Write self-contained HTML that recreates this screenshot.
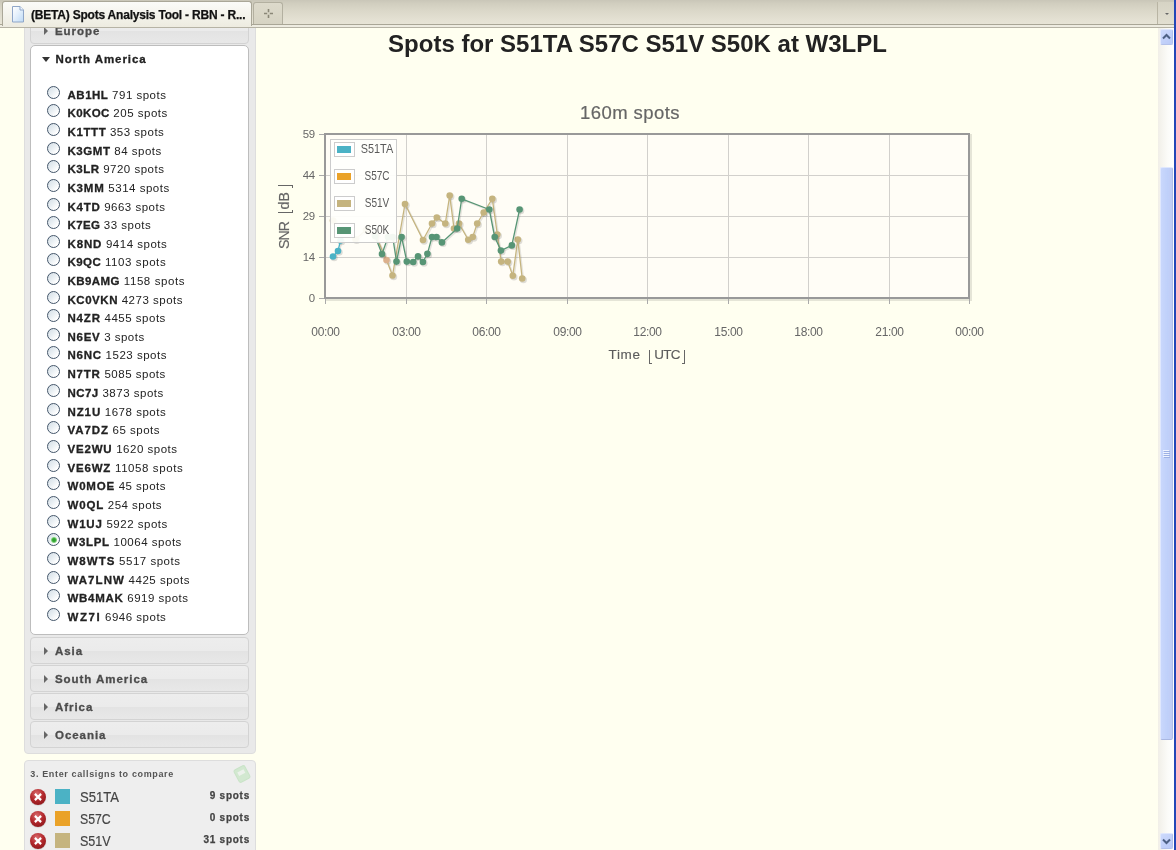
<!DOCTYPE html>
<html><head><meta charset="utf-8"><title>(BETA) Spots Analysis Tool - RBN</title>
<style>
*{box-sizing:border-box}
html,body{margin:0;padding:0;width:1176px;height:850px;overflow:hidden;background:#fffff0;font-family:"Liberation Sans",sans-serif}
.abs{position:absolute}
#wrap{position:absolute;left:0;top:0;width:1176px;height:850px;overflow:hidden;will-change:transform}
#tabbar{position:absolute;left:0;top:0;width:1176px;height:28px;background:linear-gradient(#c9c6b8 0,#d0cdbe 3px,#dad7c8 10px,#e4e1d3 20px,#e7e4d6 24px,#a9a696 24px,#a9a696 25px,#eeece1 25px,#eeece1 27px,#b6b3a5 27px,#b6b3a5 28px);z-index:20}
#tab{position:absolute;left:2px;top:1px;width:250px;height:25px;background:linear-gradient(#fbfbf8,#f3f2ea 60%,#eeece1);border:1px solid #aaa798;border-bottom:none;border-radius:3px 3px 0 0}
#tab .ttl{position:absolute;left:28px;top:6px;font-size:12px;font-weight:bold;color:#111;white-space:nowrap;letter-spacing:-0.21px;line-height:15px;-webkit-text-stroke:0.25px #111}
#newtab{position:absolute;left:253px;top:2px;width:30px;height:22px;background:linear-gradient(#dddacb,#d6d3c3);border:1px solid #b3b0a0;border-bottom:none;border-radius:3px 3px 0 0}
#tabdd{position:absolute;left:1157px;top:2px;width:18px;height:22px;border-left:1px solid #b9b5a4;background:linear-gradient(#d6d3c4,#e2dfd1)}
#winr{position:absolute;left:1174px;top:0;width:2px;height:850px;background:linear-gradient(90deg,#ffffff 0,#ffffff 25%,#2347b8 25%);z-index:30}
#sb{position:absolute;left:1158px;top:28px;width:16px;height:822px;background:linear-gradient(90deg,#f1efe8,#fbfbf8 60%,#ffffff);z-index:10}
#sb .btn{position:absolute;left:1.5px;width:13.5px;height:16px;background:linear-gradient(135deg,#cddafc,#b9c9f7);border:1px solid #dfe7fd;border-right-color:#b3c1ea;border-bottom-color:#b3c1ea;border-radius:2px}
#sb .thumb{position:absolute;left:1.5px;top:139px;width:13.5px;height:573px;background:linear-gradient(90deg,#c9d7fc,#bfd0fa 60%,#c2ccf5);border:1px solid #dfe7fd;border-right-color:#b0bee8;border-bottom-color:#a9b7e2;border-radius:2px}
#side1{position:absolute;left:24px;top:20px;width:232px;height:734px;background:#e9e9e9;border:1px solid #dddddd;border-radius:4px}
.hdr{position:absolute;left:30px;width:219px;height:27px;background:linear-gradient(#ededed 0,#ebebeb 50%,#e3e3e3 52%,#e8e8e8 100%);border:1px solid #d3d3d3;border-radius:4px;font-weight:bold;font-size:11.5px;color:#4c4c4c;white-space:nowrap}
.hdr span{position:absolute;left:24px;top:7px;letter-spacing:0.95px;-webkit-text-stroke:0.3px #4c4c4c}
.hdr i{position:absolute;left:12.5px;top:9px;width:0;height:0;border-left:4.6px solid #666;border-top:4px solid transparent;border-bottom:4px solid transparent}
#na{position:absolute;left:30px;top:45px;width:219px;height:590px;background:#fff;border:1px solid #bdbdbd;border-radius:5px}
#nah{position:absolute;left:55.5px;top:53px;font-weight:bold;font-size:11.5px;color:#222;letter-spacing:0.95px;white-space:nowrap;-webkit-text-stroke:0.3px #222}
#natri{position:absolute;left:42px;top:57px;width:0;height:0;border-top:5px solid #333;border-left:4px solid transparent;border-right:4px solid transparent}
.row{position:absolute;left:0;width:256px;height:18px;white-space:nowrap;font-size:11.5px;color:#222}
.row .t{position:absolute;left:67.5px;top:3px;line-height:14px}
.radio{position:absolute;left:47px;top:1px;width:13px;height:13px;border-radius:50%;border:1px solid #44566a;background:linear-gradient(135deg,#d3dee6 0,#e9eff3 45%,#ffffff 80%)}
.radio.chk:after{content:"";position:absolute;left:2.5px;top:2.5px;width:6px;height:6px;border-radius:50%;background:radial-gradient(circle at 50% 50%,#2c9a2c 0,#36a836 35%,#a8e6a0 75%,rgba(200,240,195,0.6) 100%)}
#side2{position:absolute;left:24px;top:760px;width:232px;height:100px;background:#eeeeee;border:1px solid #dddddd;border-radius:4px}
#s2t{position:absolute;left:30.3px;top:768px;font-size:9px;font-weight:bold;color:#555;white-space:nowrap;letter-spacing:0.64px;line-height:12px}
.cs{position:absolute;left:24px;width:232px;height:22px}
.cs .x{position:absolute;left:6px;top:0;width:16px;height:16px;border-radius:50%;background:radial-gradient(circle at 42% 28%,#d86a6c 0,#b3292d 45%,#8a1619 85%,#7a1114 100%);box-shadow:0 0.5px 1px rgba(0,0,0,.2)}
.cs .x svg{position:absolute;left:0;top:0}
.cs .c{position:absolute;left:31px;top:0px;width:15px;height:15px}
.cs .n{position:absolute;left:56px;top:0px;font-size:14.8px;color:#444;line-height:16px;transform:scaleX(0.885);transform-origin:0 0;white-space:nowrap;-webkit-text-stroke:0.2px #444}
.cs .s{position:absolute;right:6px;top:-0.5px;font-size:10px;font-weight:bold;color:#444;letter-spacing:0.75px;line-height:14px;-webkit-text-stroke:0.25px #444}
#title{position:absolute;left:256px;top:29px;width:763px;text-align:center;font-size:24px;font-weight:bold;color:#222;white-space:nowrap;line-height:30px}
#ctitle{position:absolute;left:530px;top:101.5px;width:200px;text-align:center;font-size:18.5px;color:#666;white-space:nowrap;line-height:22px;letter-spacing:0.45px;-webkit-text-stroke:0.2px #666}
.plot{position:absolute;left:0;top:0}
.xl{position:absolute;top:325px;width:40px;text-align:center;font-size:12px;color:#666;line-height:14px;letter-spacing:-0.35px;white-space:nowrap}
.yl{position:absolute;left:283px;width:32px;text-align:right;font-size:11.4px;color:#666;line-height:14px;letter-spacing:-0.15px}
#ylab{position:absolute;left:275.1px;top:248px;width:70px;height:18px;font-size:14.2px;color:#666;transform:rotate(-90deg);transform-origin:0 0;line-height:18px;white-space:nowrap}
#xlab{position:absolute;left:608.6px;top:346.5px;width:90px;height:18px;font-size:13.5px;color:#5c5c5c;line-height:18px;white-space:nowrap}
#xlab span,#ylab span{position:absolute;top:0;-webkit-text-stroke:0.15px #5c5c5c}
#xlab span{top:-0.5px}
.bl,.br{position:absolute;top:3.4px;width:3.3px;height:14.2px;border-bottom:1.5px solid #666}
.bl{border-left:1.5px solid #666}
.br{border-right:1.5px solid #666}
#legend{position:absolute;left:330px;top:139px;width:66.5px;height:103.5px;background:rgba(255,255,252,0.93);border:1px solid #cccccc}
#legend .sw{position:absolute;left:3px;width:20.5px;height:14.5px;border:1px solid #ccc;background:#fff}
#legend .sw i{position:absolute;left:2px;top:2.5px;width:14px;height:7.5px}
#legend .lt{position:absolute;left:26px;width:40px;text-align:center;font-size:12.8px;color:#5a5a5a;line-height:16px;transform:scaleX(0.85);white-space:nowrap}
</style></head><body><div id="wrap">
<div id="tabbar"><div id="tab">
<svg class="abs" style="left:8px;top:4px" width="14" height="17" viewBox="0 0 14 17"><defs><linearGradient id="pg" x1="0" y1="0" x2="1" y2="1"><stop offset="0" stop-color="#ffffff"/><stop offset="0.45" stop-color="#e6f1fc"/><stop offset="1" stop-color="#bcd9f5"/></linearGradient></defs><path d="M1.5 .5h7.5l3.5 3.5v12h-11z" fill="url(#pg)" stroke="#8fa6c8"/><path d="M9 .5v3.5h3.5" fill="#f4f9ff" stroke="#8fa6c8"/></svg>
<div class="ttl">(BETA) Spots Analysis Tool - RBN - R...</div></div>
<div id="newtab"><svg class="abs" style="left:10px;top:6px" width="9" height="9" viewBox="0 0 9 9"><path d="M4.5 0v9M0 4.5h9" stroke="#8a8777" stroke-width="1.6" stroke-dasharray="3.2 2.6"/></svg></div>
<div id="tabdd"><i class="abs" style="left:6.5px;top:10.5px;width:0;height:0;border-top:2.5px solid #666;border-left:2.5px solid transparent;border-right:2.5px solid transparent"></i></div>
</div>
<div id="side1"></div>
<div class="hdr" style="top:17px"><i></i><span>Europe</span></div>
<div id="na"></div><i id="natri"></i><div id="nah">North America</div>
<div class="row" style="top:85px"><i class="radio"></i><span class="t"><b style="letter-spacing:0.51px;-webkit-text-stroke:0.3px #222">AB1HL</b><span style="letter-spacing:0.50px">&nbsp;791 spots</span></span></div><div class="row" style="top:103px"><i class="radio"></i><span class="t"><b style="letter-spacing:0.38px;-webkit-text-stroke:0.3px #222">K0KOC</b><span style="letter-spacing:0.50px">&nbsp;205 spots</span></span></div><div class="row" style="top:122px"><i class="radio"></i><span class="t"><b style="letter-spacing:0.60px;-webkit-text-stroke:0.3px #222">K1TTT</b><span style="letter-spacing:0.50px">&nbsp;353 spots</span></span></div><div class="row" style="top:141px"><i class="radio"></i><span class="t"><b style="letter-spacing:0.57px;-webkit-text-stroke:0.3px #222">K3GMT</b><span style="letter-spacing:0.49px">&nbsp;84 spots</span></span></div><div class="row" style="top:159px"><i class="radio"></i><span class="t"><b style="letter-spacing:0.47px;-webkit-text-stroke:0.3px #222">K3LR</b><span style="letter-spacing:0.51px">&nbsp;9720 spots</span></span></div><div class="row" style="top:178px"><i class="radio"></i><span class="t"><b style="letter-spacing:0.81px;-webkit-text-stroke:0.3px #222">K3MM</b><span style="letter-spacing:0.51px">&nbsp;5314 spots</span></span></div><div class="row" style="top:197px"><i class="radio"></i><span class="t"><b style="letter-spacing:0.72px;-webkit-text-stroke:0.3px #222">K4TD</b><span style="letter-spacing:0.51px">&nbsp;9663 spots</span></span></div><div class="row" style="top:215px"><i class="radio"></i><span class="t"><b style="letter-spacing:0.34px;-webkit-text-stroke:0.3px #222">K7EG</b><span style="letter-spacing:0.49px">&nbsp;33 spots</span></span></div><div class="row" style="top:234px"><i class="radio"></i><span class="t"><b style="letter-spacing:0.85px;-webkit-text-stroke:0.3px #222">K8ND</b><span style="letter-spacing:0.51px">&nbsp;9414 spots</span></span></div><div class="row" style="top:252px"><i class="radio"></i><span class="t"><b style="letter-spacing:0.42px;-webkit-text-stroke:0.3px #222">K9QC</b><span style="letter-spacing:0.59px">&nbsp;1103 spots</span></span></div><div class="row" style="top:271px"><i class="radio"></i><span class="t"><b style="letter-spacing:0.44px;-webkit-text-stroke:0.3px #222">KB9AMG</b><span style="letter-spacing:0.59px">&nbsp;1158 spots</span></span></div><div class="row" style="top:290px"><i class="radio"></i><span class="t"><b style="letter-spacing:0.53px;-webkit-text-stroke:0.3px #222">KC0VKN</b><span style="letter-spacing:0.51px">&nbsp;4273 spots</span></span></div><div class="row" style="top:308px"><i class="radio"></i><span class="t"><b style="letter-spacing:0.82px;-webkit-text-stroke:0.3px #222">N4ZR</b><span style="letter-spacing:0.51px">&nbsp;4455 spots</span></span></div><div class="row" style="top:327px"><i class="radio"></i><span class="t"><b style="letter-spacing:0.74px;-webkit-text-stroke:0.3px #222">N6EV</b><span style="letter-spacing:0.48px">&nbsp;3 spots</span></span></div><div class="row" style="top:345px"><i class="radio"></i><span class="t"><b style="letter-spacing:0.77px;-webkit-text-stroke:0.3px #222">N6NC</b><span style="letter-spacing:0.51px">&nbsp;1523 spots</span></span></div><div class="row" style="top:364px"><i class="radio"></i><span class="t"><b style="letter-spacing:0.79px;-webkit-text-stroke:0.3px #222">N7TR</b><span style="letter-spacing:0.51px">&nbsp;5085 spots</span></span></div><div class="row" style="top:383px"><i class="radio"></i><span class="t"><b style="letter-spacing:0.45px;-webkit-text-stroke:0.3px #222">NC7J</b><span style="letter-spacing:0.51px">&nbsp;3873 spots</span></span></div><div class="row" style="top:402px"><i class="radio"></i><span class="t"><b style="letter-spacing:0.89px;-webkit-text-stroke:0.3px #222">NZ1U</b><span style="letter-spacing:0.51px">&nbsp;1678 spots</span></span></div><div class="row" style="top:420px"><i class="radio"></i><span class="t"><b style="letter-spacing:0.91px;-webkit-text-stroke:0.3px #222">VA7DZ</b><span style="letter-spacing:0.49px">&nbsp;65 spots</span></span></div><div class="row" style="top:439px"><i class="radio"></i><span class="t"><b style="letter-spacing:0.82px;-webkit-text-stroke:0.3px #222">VE2WU</b><span style="letter-spacing:0.51px">&nbsp;1620 spots</span></span></div><div class="row" style="top:458px"><i class="radio"></i><span class="t"><b style="letter-spacing:0.82px;-webkit-text-stroke:0.3px #222">VE6WZ</b><span style="letter-spacing:0.59px">&nbsp;11058 spots</span></span></div><div class="row" style="top:476px"><i class="radio"></i><span class="t"><b style="letter-spacing:0.80px;-webkit-text-stroke:0.3px #222">W0MOE</b><span style="letter-spacing:0.49px">&nbsp;45 spots</span></span></div><div class="row" style="top:495px"><i class="radio"></i><span class="t"><b style="letter-spacing:0.83px;-webkit-text-stroke:0.3px #222">W0QL</b><span style="letter-spacing:0.50px">&nbsp;254 spots</span></span></div><div class="row" style="top:514px"><i class="radio"></i><span class="t"><b style="letter-spacing:0.81px;-webkit-text-stroke:0.3px #222">W1UJ</b><span style="letter-spacing:0.51px">&nbsp;5922 spots</span></span></div><div class="row" style="top:532px"><i class="radio chk"></i><span class="t"><b style="letter-spacing:0.66px;-webkit-text-stroke:0.3px #222">W3LPL</b><span style="letter-spacing:0.52px">&nbsp;10064 spots</span></span></div><div class="row" style="top:551px"><i class="radio"></i><span class="t"><b style="letter-spacing:1.02px;-webkit-text-stroke:0.3px #222">W8WTS</b><span style="letter-spacing:0.51px">&nbsp;5517 spots</span></span></div><div class="row" style="top:570px"><i class="radio"></i><span class="t"><b style="letter-spacing:1.05px;-webkit-text-stroke:0.3px #222">WA7LNW</b><span style="letter-spacing:0.51px">&nbsp;4425 spots</span></span></div><div class="row" style="top:588px"><i class="radio"></i><span class="t"><b style="letter-spacing:0.71px;-webkit-text-stroke:0.3px #222">WB4MAK</b><span style="letter-spacing:0.51px">&nbsp;6919 spots</span></span></div><div class="row" style="top:607px"><i class="radio"></i><span class="t"><b style="letter-spacing:1.58px;-webkit-text-stroke:0.3px #222">WZ7I</b><span style="letter-spacing:0.51px">&nbsp;6946 spots</span></span></div>
<div class="hdr" style="top:637px"><i></i><span>Asia</span></div>
<div class="hdr" style="top:665px"><i></i><span>South America</span></div>
<div class="hdr" style="top:693px"><i></i><span>Africa</span></div>
<div class="hdr" style="top:721px"><i></i><span>Oceania</span></div>
<div id="side2"></div>
<div id="s2t">3. Enter callsigns to compare</div>
<svg class="abs" style="left:232px;top:764px;opacity:.38" width="20" height="20" viewBox="0 0 20 20"><g transform="rotate(-28 10 10)"><rect x="4" y="3" width="12" height="14" rx="2" fill="#a5dfa0" stroke="#8fd28a"/><rect x="6.5" y="6.5" width="7" height="4" fill="#e9f8e8"/></g></svg>
<div class="cs" style="top:789px"><div class="x"><svg width="16" height="16" viewBox="0 0 16 16"><path d="M4.9 4.9l6.2 6.2M11.1 4.9l-6.2 6.2" stroke="#fff" stroke-width="2.2" stroke-linecap="butt"/></svg></div><div class="c" style="background:#4bb2c5"></div><div class="n">S51TA</div><div class="s">9 spots</div></div>
<div class="cs" style="top:811px"><div class="x"><svg width="16" height="16" viewBox="0 0 16 16"><path d="M4.9 4.9l6.2 6.2M11.1 4.9l-6.2 6.2" stroke="#fff" stroke-width="2.2" stroke-linecap="butt"/></svg></div><div class="c" style="background:#EAA228"></div><div class="n" style="transform:scaleX(0.83)">S57C</div><div class="s">0 spots</div></div>
<div class="cs" style="top:833px"><div class="x"><svg width="16" height="16" viewBox="0 0 16 16"><path d="M4.9 4.9l6.2 6.2M11.1 4.9l-6.2 6.2" stroke="#fff" stroke-width="2.2" stroke-linecap="butt"/></svg></div><div class="c" style="background:#c5b47f"></div><div class="n" style="transform:scaleX(0.848)">S51V</div><div class="s">31 spots</div></div>
<div id="title">Spots for S51TA S57C S51V S50K at W3LPL</div>
<div id="ctitle">160m spots</div>
<svg class="plot" width="1176" height="850" viewBox="0 0 1176 850">
<rect x="326.5" y="135.5" width="644.0" height="164.0" fill="none" stroke="rgba(0,0,0,0.10)" stroke-width="3"/>
<rect x="325.0" y="134.0" width="644.0" height="164.0" fill="#fffdf6"/>
<line x1="406.5" y1="134.0" x2="406.5" y2="298.0" stroke="#d2d0cc" stroke-width="1"/><line x1="486.5" y1="134.0" x2="486.5" y2="298.0" stroke="#d2d0cc" stroke-width="1"/><line x1="567.5" y1="134.0" x2="567.5" y2="298.0" stroke="#d2d0cc" stroke-width="1"/><line x1="647.5" y1="134.0" x2="647.5" y2="298.0" stroke="#d2d0cc" stroke-width="1"/><line x1="728.5" y1="134.0" x2="728.5" y2="298.0" stroke="#d2d0cc" stroke-width="1"/><line x1="808.5" y1="134.0" x2="808.5" y2="298.0" stroke="#d2d0cc" stroke-width="1"/><line x1="889.5" y1="134.0" x2="889.5" y2="298.0" stroke="#d2d0cc" stroke-width="1"/><line x1="325.0" y1="175.5" x2="969.0" y2="175.5" stroke="#d2d0cc" stroke-width="1"/><line x1="325.0" y1="216.5" x2="969.0" y2="216.5" stroke="#d2d0cc" stroke-width="1"/><line x1="325.0" y1="257.5" x2="969.0" y2="257.5" stroke="#d2d0cc" stroke-width="1"/><line x1="325.5" y1="298.0" x2="325.5" y2="304.0" stroke="#aaa" stroke-width="1"/><line x1="406.5" y1="298.0" x2="406.5" y2="304.0" stroke="#aaa" stroke-width="1"/><line x1="486.5" y1="298.0" x2="486.5" y2="304.0" stroke="#aaa" stroke-width="1"/><line x1="567.5" y1="298.0" x2="567.5" y2="304.0" stroke="#aaa" stroke-width="1"/><line x1="647.5" y1="298.0" x2="647.5" y2="304.0" stroke="#aaa" stroke-width="1"/><line x1="728.5" y1="298.0" x2="728.5" y2="304.0" stroke="#aaa" stroke-width="1"/><line x1="808.5" y1="298.0" x2="808.5" y2="304.0" stroke="#aaa" stroke-width="1"/><line x1="889.5" y1="298.0" x2="889.5" y2="304.0" stroke="#aaa" stroke-width="1"/><line x1="969.5" y1="298.0" x2="969.5" y2="304.0" stroke="#aaa" stroke-width="1"/><line x1="319.0" y1="134.5" x2="325.0" y2="134.5" stroke="#aaa" stroke-width="1"/><line x1="319.0" y1="175.5" x2="325.0" y2="175.5" stroke="#aaa" stroke-width="1"/><line x1="319.0" y1="216.5" x2="325.0" y2="216.5" stroke="#aaa" stroke-width="1"/><line x1="319.0" y1="257.5" x2="325.0" y2="257.5" stroke="#aaa" stroke-width="1"/><line x1="319.0" y1="298.5" x2="325.0" y2="298.5" stroke="#aaa" stroke-width="1"/>
<rect x="325.0" y="134.0" width="644.0" height="164.0" fill="none" stroke="#999999" stroke-width="2"/>
<polyline points="333.0,256.5 338.0,251.0 340.5,240.5" fill="none" stroke="rgba(0,0,0,0.10)" stroke-width="1.6" transform="translate(1.2,1.2)"/><circle cx="334.2" cy="257.7" r="3.5" fill="rgba(0,0,0,0.13)"/><circle cx="339.2" cy="252.2" r="3.5" fill="rgba(0,0,0,0.13)"/><circle cx="341.7" cy="241.7" r="3.5" fill="rgba(0,0,0,0.13)"/><polyline points="333.0,256.5 338.0,251.0 340.5,240.5" fill="none" stroke="#4bb2c5" stroke-width="1.3" stroke-linejoin="round"/><circle cx="333.0" cy="256.5" r="3.3" fill="#4bb2c5"/><circle cx="338.0" cy="251.0" r="3.3" fill="#4bb2c5"/><circle cx="340.5" cy="240.5" r="3.3" fill="#4bb2c5"/><polyline points="333.0,220.5 341.0,228.0 355.5,239.3 366.0,230.0 376.0,236.0 386.5,260.0 392.5,275.5 405.0,204.0 423.0,240.0 432.0,223.5 436.8,217.5 445.3,223.5 449.7,195.5 454.0,228.5 459.0,223.5 468.2,239.8 472.7,237.0 477.2,223.5 483.7,212.5 492.3,198.8 497.3,234.5 501.2,261.6 507.7,261.6 512.8,275.8 517.8,239.6 522.2,278.5" fill="none" stroke="rgba(0,0,0,0.10)" stroke-width="1.6" transform="translate(1.2,1.2)"/><circle cx="334.2" cy="221.7" r="3.5" fill="rgba(0,0,0,0.13)"/><circle cx="342.2" cy="229.2" r="3.5" fill="rgba(0,0,0,0.13)"/><circle cx="356.7" cy="240.5" r="3.5" fill="rgba(0,0,0,0.13)"/><circle cx="367.2" cy="231.2" r="3.5" fill="rgba(0,0,0,0.13)"/><circle cx="377.2" cy="237.2" r="3.5" fill="rgba(0,0,0,0.13)"/><circle cx="387.7" cy="261.2" r="3.5" fill="rgba(0,0,0,0.13)"/><circle cx="393.7" cy="276.7" r="3.5" fill="rgba(0,0,0,0.13)"/><circle cx="406.2" cy="205.2" r="3.5" fill="rgba(0,0,0,0.13)"/><circle cx="424.2" cy="241.2" r="3.5" fill="rgba(0,0,0,0.13)"/><circle cx="433.2" cy="224.7" r="3.5" fill="rgba(0,0,0,0.13)"/><circle cx="438.0" cy="218.7" r="3.5" fill="rgba(0,0,0,0.13)"/><circle cx="446.5" cy="224.7" r="3.5" fill="rgba(0,0,0,0.13)"/><circle cx="450.9" cy="196.7" r="3.5" fill="rgba(0,0,0,0.13)"/><circle cx="455.2" cy="229.7" r="3.5" fill="rgba(0,0,0,0.13)"/><circle cx="460.2" cy="224.7" r="3.5" fill="rgba(0,0,0,0.13)"/><circle cx="469.4" cy="241.0" r="3.5" fill="rgba(0,0,0,0.13)"/><circle cx="473.9" cy="238.2" r="3.5" fill="rgba(0,0,0,0.13)"/><circle cx="478.4" cy="224.7" r="3.5" fill="rgba(0,0,0,0.13)"/><circle cx="484.9" cy="213.7" r="3.5" fill="rgba(0,0,0,0.13)"/><circle cx="493.5" cy="200.0" r="3.5" fill="rgba(0,0,0,0.13)"/><circle cx="498.5" cy="235.7" r="3.5" fill="rgba(0,0,0,0.13)"/><circle cx="502.4" cy="262.8" r="3.5" fill="rgba(0,0,0,0.13)"/><circle cx="508.9" cy="262.8" r="3.5" fill="rgba(0,0,0,0.13)"/><circle cx="514.0" cy="277.0" r="3.5" fill="rgba(0,0,0,0.13)"/><circle cx="519.0" cy="240.8" r="3.5" fill="rgba(0,0,0,0.13)"/><circle cx="523.4" cy="279.7" r="3.5" fill="rgba(0,0,0,0.13)"/><polyline points="333.0,220.5 341.0,228.0 355.5,239.3 366.0,230.0 376.0,236.0 386.5,260.0 392.5,275.5 405.0,204.0 423.0,240.0 432.0,223.5 436.8,217.5 445.3,223.5 449.7,195.5 454.0,228.5 459.0,223.5 468.2,239.8 472.7,237.0 477.2,223.5 483.7,212.5 492.3,198.8 497.3,234.5 501.2,261.6 507.7,261.6 512.8,275.8 517.8,239.6 522.2,278.5" fill="none" stroke="#c5b47f" stroke-width="1.3" stroke-linejoin="round"/><circle cx="333.0" cy="220.5" r="3.3" fill="#c5b47f"/><circle cx="341.0" cy="228.0" r="3.3" fill="#c5b47f"/><circle cx="355.5" cy="239.3" r="3.3" fill="#c5b47f"/><circle cx="366.0" cy="230.0" r="3.3" fill="#c5b47f"/><circle cx="376.0" cy="236.0" r="3.3" fill="#c5b47f"/><circle cx="386.5" cy="260.0" r="3.3" fill="#dcb08c"/><circle cx="392.5" cy="275.5" r="3.3" fill="#c5b47f"/><circle cx="405.0" cy="204.0" r="3.3" fill="#c5b47f"/><circle cx="423.0" cy="240.0" r="3.3" fill="#c5b47f"/><circle cx="432.0" cy="223.5" r="3.3" fill="#c5b47f"/><circle cx="436.8" cy="217.5" r="3.3" fill="#c5b47f"/><circle cx="445.3" cy="223.5" r="3.3" fill="#c5b47f"/><circle cx="449.7" cy="195.5" r="3.3" fill="#c5b47f"/><circle cx="454.0" cy="228.5" r="3.3" fill="#c5b47f"/><circle cx="459.0" cy="223.5" r="3.3" fill="#c5b47f"/><circle cx="468.2" cy="239.8" r="3.3" fill="#c5b47f"/><circle cx="472.7" cy="237.0" r="3.3" fill="#c5b47f"/><circle cx="477.2" cy="223.5" r="3.3" fill="#c5b47f"/><circle cx="483.7" cy="212.5" r="3.3" fill="#c5b47f"/><circle cx="492.3" cy="198.8" r="3.3" fill="#c5b47f"/><circle cx="497.3" cy="234.5" r="3.3" fill="#c5b47f"/><circle cx="501.2" cy="261.6" r="3.3" fill="#c5b47f"/><circle cx="507.7" cy="261.6" r="3.3" fill="#c5b47f"/><circle cx="512.8" cy="275.8" r="3.3" fill="#c5b47f"/><circle cx="517.8" cy="239.6" r="3.3" fill="#c5b47f"/><circle cx="522.2" cy="278.5" r="3.3" fill="#c5b47f"/><polyline points="375.0,236.0 382.0,254.0 388.0,237.0 392.7,237.0 396.5,261.6 401.6,237.0 406.8,261.6 413.2,262.0 418.0,256.4 422.9,262.0 427.4,253.8 432.0,237.0 436.5,237.0 441.9,242.4 457.2,228.5 461.7,198.8 489.3,209.5 494.7,237.0 500.9,250.6 511.8,245.4 519.6,209.5" fill="none" stroke="rgba(0,0,0,0.10)" stroke-width="1.6" transform="translate(1.2,1.2)"/><circle cx="376.2" cy="237.2" r="3.5" fill="rgba(0,0,0,0.13)"/><circle cx="383.2" cy="255.2" r="3.5" fill="rgba(0,0,0,0.13)"/><circle cx="389.2" cy="238.2" r="3.5" fill="rgba(0,0,0,0.13)"/><circle cx="393.9" cy="238.2" r="3.5" fill="rgba(0,0,0,0.13)"/><circle cx="397.7" cy="262.8" r="3.5" fill="rgba(0,0,0,0.13)"/><circle cx="402.8" cy="238.2" r="3.5" fill="rgba(0,0,0,0.13)"/><circle cx="408.0" cy="262.8" r="3.5" fill="rgba(0,0,0,0.13)"/><circle cx="414.4" cy="263.2" r="3.5" fill="rgba(0,0,0,0.13)"/><circle cx="419.2" cy="257.6" r="3.5" fill="rgba(0,0,0,0.13)"/><circle cx="424.1" cy="263.2" r="3.5" fill="rgba(0,0,0,0.13)"/><circle cx="428.6" cy="255.0" r="3.5" fill="rgba(0,0,0,0.13)"/><circle cx="433.2" cy="238.2" r="3.5" fill="rgba(0,0,0,0.13)"/><circle cx="437.7" cy="238.2" r="3.5" fill="rgba(0,0,0,0.13)"/><circle cx="443.1" cy="243.6" r="3.5" fill="rgba(0,0,0,0.13)"/><circle cx="458.4" cy="229.7" r="3.5" fill="rgba(0,0,0,0.13)"/><circle cx="462.9" cy="200.0" r="3.5" fill="rgba(0,0,0,0.13)"/><circle cx="490.5" cy="210.7" r="3.5" fill="rgba(0,0,0,0.13)"/><circle cx="495.9" cy="238.2" r="3.5" fill="rgba(0,0,0,0.13)"/><circle cx="502.1" cy="251.8" r="3.5" fill="rgba(0,0,0,0.13)"/><circle cx="513.0" cy="246.6" r="3.5" fill="rgba(0,0,0,0.13)"/><circle cx="520.8" cy="210.7" r="3.5" fill="rgba(0,0,0,0.13)"/><polyline points="375.0,236.0 382.0,254.0 388.0,237.0 392.7,237.0 396.5,261.6 401.6,237.0 406.8,261.6 413.2,262.0 418.0,256.4 422.9,262.0 427.4,253.8 432.0,237.0 436.5,237.0 441.9,242.4 457.2,228.5 461.7,198.8 489.3,209.5 494.7,237.0 500.9,250.6 511.8,245.4 519.6,209.5" fill="none" stroke="#579575" stroke-width="1.3" stroke-linejoin="round"/><circle cx="375.0" cy="236.0" r="3.3" fill="#579575"/><circle cx="382.0" cy="254.0" r="3.3" fill="#579575"/><circle cx="388.0" cy="237.0" r="3.3" fill="#579575"/><circle cx="392.7" cy="237.0" r="3.3" fill="#579575"/><circle cx="396.5" cy="261.6" r="3.3" fill="#579575"/><circle cx="401.6" cy="237.0" r="3.3" fill="#579575"/><circle cx="406.8" cy="261.6" r="3.3" fill="#579575"/><circle cx="413.2" cy="262.0" r="3.3" fill="#579575"/><circle cx="418.0" cy="256.4" r="3.3" fill="#579575"/><circle cx="422.9" cy="262.0" r="3.3" fill="#579575"/><circle cx="427.4" cy="253.8" r="3.3" fill="#579575"/><circle cx="432.0" cy="237.0" r="3.3" fill="#579575"/><circle cx="436.5" cy="237.0" r="3.3" fill="#579575"/><circle cx="441.9" cy="242.4" r="3.3" fill="#579575"/><circle cx="457.2" cy="228.5" r="3.3" fill="#579575"/><circle cx="461.7" cy="198.8" r="3.3" fill="#579575"/><circle cx="489.3" cy="209.5" r="3.3" fill="#579575"/><circle cx="494.7" cy="237.0" r="3.3" fill="#579575"/><circle cx="500.9" cy="250.6" r="3.3" fill="#579575"/><circle cx="511.8" cy="245.4" r="3.3" fill="#579575"/><circle cx="519.6" cy="209.5" r="3.3" fill="#579575"/>
</svg>
<div class="xl" style="left:305.5px">00:00</div><div class="xl" style="left:386.5px">03:00</div><div class="xl" style="left:466.5px">06:00</div><div class="xl" style="left:547.5px">09:00</div><div class="xl" style="left:627.5px">12:00</div><div class="xl" style="left:708.5px">15:00</div><div class="xl" style="left:788.5px">18:00</div><div class="xl" style="left:869.5px">21:00</div><div class="xl" style="left:949.5px">00:00</div><div class="yl" style="top:127.0px">59</div><div class="yl" style="top:168.0px">44</div><div class="yl" style="top:209.0px">29</div><div class="yl" style="top:250.0px">14</div><div class="yl" style="top:291.0px">0</div>
<div id="xlab"><span style="left:0;letter-spacing:0.6px">Time</span><i class="bl" style="left:40.2px"></i><span style="left:45.6px;letter-spacing:-0.75px">UTC</span><i class="br" style="left:73.2px"></i></div>
<div id="ylab"><span style="left:-1px;letter-spacing:-1px">SNR</span><i class="bl" style="left:35.2px"></i><span style="left:38.6px;letter-spacing:-0.1px">dB</span><i class="br" style="left:59.8px"></i></div>
<div id="legend"><div class="sw" style="top:2.0px"><i style="background:#4bb2c5"></i></div><div class="lt" style="top:0.5px;transform:scaleX(0.85)">S51TA</div><div class="sw" style="top:29.1px"><i style="background:#EAA228"></i></div><div class="lt" style="top:27.6px;transform:scaleX(0.785)">S57C</div><div class="sw" style="top:56.1px"><i style="background:#c5b47f"></i></div><div class="lt" style="top:54.6px;transform:scaleX(0.785)">S51V</div><div class="sw" style="top:83.2px"><i style="background:#579575"></i></div><div class="lt" style="top:81.7px;transform:scaleX(0.785)">S50K</div></div>
<div id="sb"><div class="btn" style="top:0.5px"><svg class="abs" style="left:1.5px;top:2.5px" width="9" height="9" viewBox="0 0 9 9"><path d="M1 6.5l3.5-3.5 3.5 3.5" fill="none" stroke="#4d6185" stroke-width="2"/></svg></div>
<div class="thumb"><svg class="abs" style="left:2.5px;top:282px" width="7" height="8" viewBox="0 0 7 8"><path d="M0 .5h6M0 2.5h6M0 4.5h6M0 6.5h6" stroke="#eef3ff" stroke-width="1"/><path d="M1 1.5h6M1 3.5h6M1 5.5h6M1 7.5h6" stroke="#9db0e4" stroke-width="1"/></svg></div>
<div class="btn" style="top:805px"><svg class="abs" style="left:1.5px;top:3px" width="9" height="9" viewBox="0 0 9 9"><path d="M1 2.5l3.5 3.5 3.5-3.5" fill="none" stroke="#4d6185" stroke-width="2"/></svg></div></div>
<div id="winr"></div>
</div></body></html>
